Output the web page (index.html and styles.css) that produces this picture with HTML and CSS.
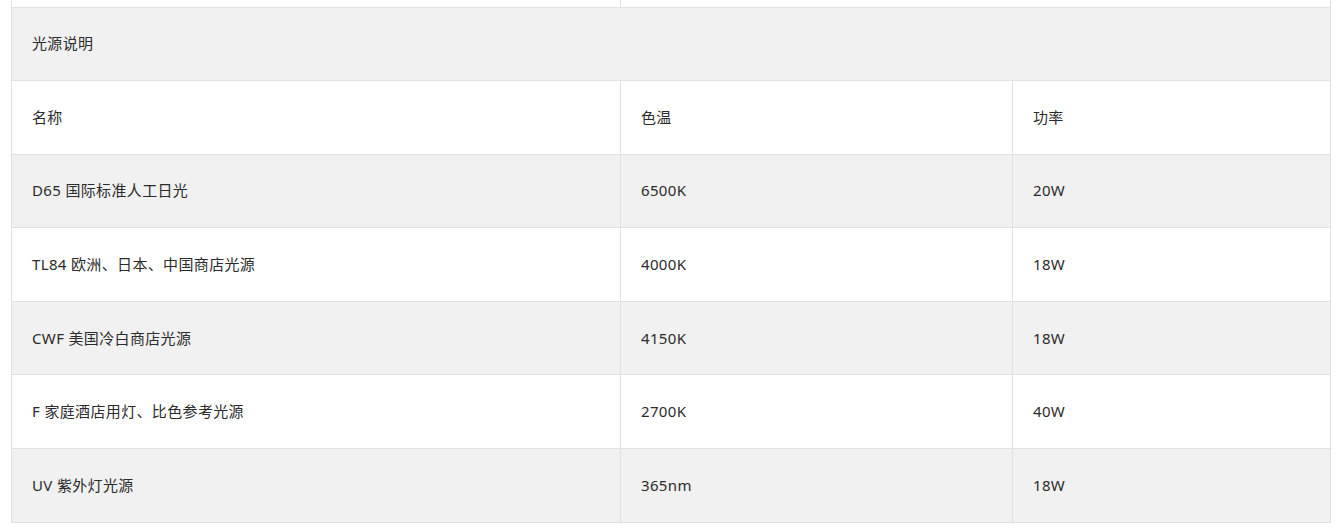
FILE: index.html
```html
<!DOCTYPE html>
<html lang="zh-CN">
<head>
<meta charset="utf-8">
<title>光源说明</title>
<link rel="stylesheet" href="styles.css">
</head>
<body>
<div class="page">
  <table class="spec">
    <colgroup>
      <col class="c1">
      <col class="c2">
      <col class="c3">
    </colgroup>
    <tbody>
      <tr class="row-white"><td>&nbsp;</td><td colspan="2">&nbsp;</td></tr>
      <tr class="row-gray"><td colspan="3">光源说明</td></tr>
      <tr class="row-white"><td>名称</td><td>色温</td><td>功率</td></tr>
      <tr class="row-gray"><td>D65 国际标准人工日光</td><td>6500K</td><td>20W</td></tr>
      <tr class="row-white"><td>TL84 欧洲、日本、中国商店光源</td><td>4000K</td><td>18W</td></tr>
      <tr class="row-gray"><td>CWF 美国冷白商店光源</td><td>4150K</td><td>18W</td></tr>
      <tr class="row-white"><td>F 家庭酒店用灯、比色参考光源</td><td>2700K</td><td>40W</td></tr>
      <tr class="row-gray"><td>UV 紫外灯光源</td><td>365nm</td><td>18W</td></tr>
    </tbody>
  </table>
</div>
</body>
</html>
```
FILE: styles.css
```css
html, body {
  margin: 0;
  padding: 0;
  background: #ffffff;
}
.page {
  height: 532px;
  overflow: hidden;
  padding-left: 11px;
  font-family: "Noto Sans", "Noto Sans CJK SC", sans-serif;
  font-size: 15px;
  letter-spacing: 0.35px;
  color: #2b2b2b;
}
.spec {
  width: 1319px;
  margin-top: -67px;
  border-collapse: collapse;
  table-layout: fixed;
}
.c1 { width: 609px; }
.c2 { width: 392px; }
.c3 { width: 318px; }
.spec td {
  height: 71.57px;
  padding: 0 20px 1px;
  border: 1px solid #e2e2e2;
  vertical-align: middle;
  line-height: 20px;
  text-align: left;
}
.row-gray td { background: #f1f1f1; }
.row-white td { background: #ffffff; }
```
